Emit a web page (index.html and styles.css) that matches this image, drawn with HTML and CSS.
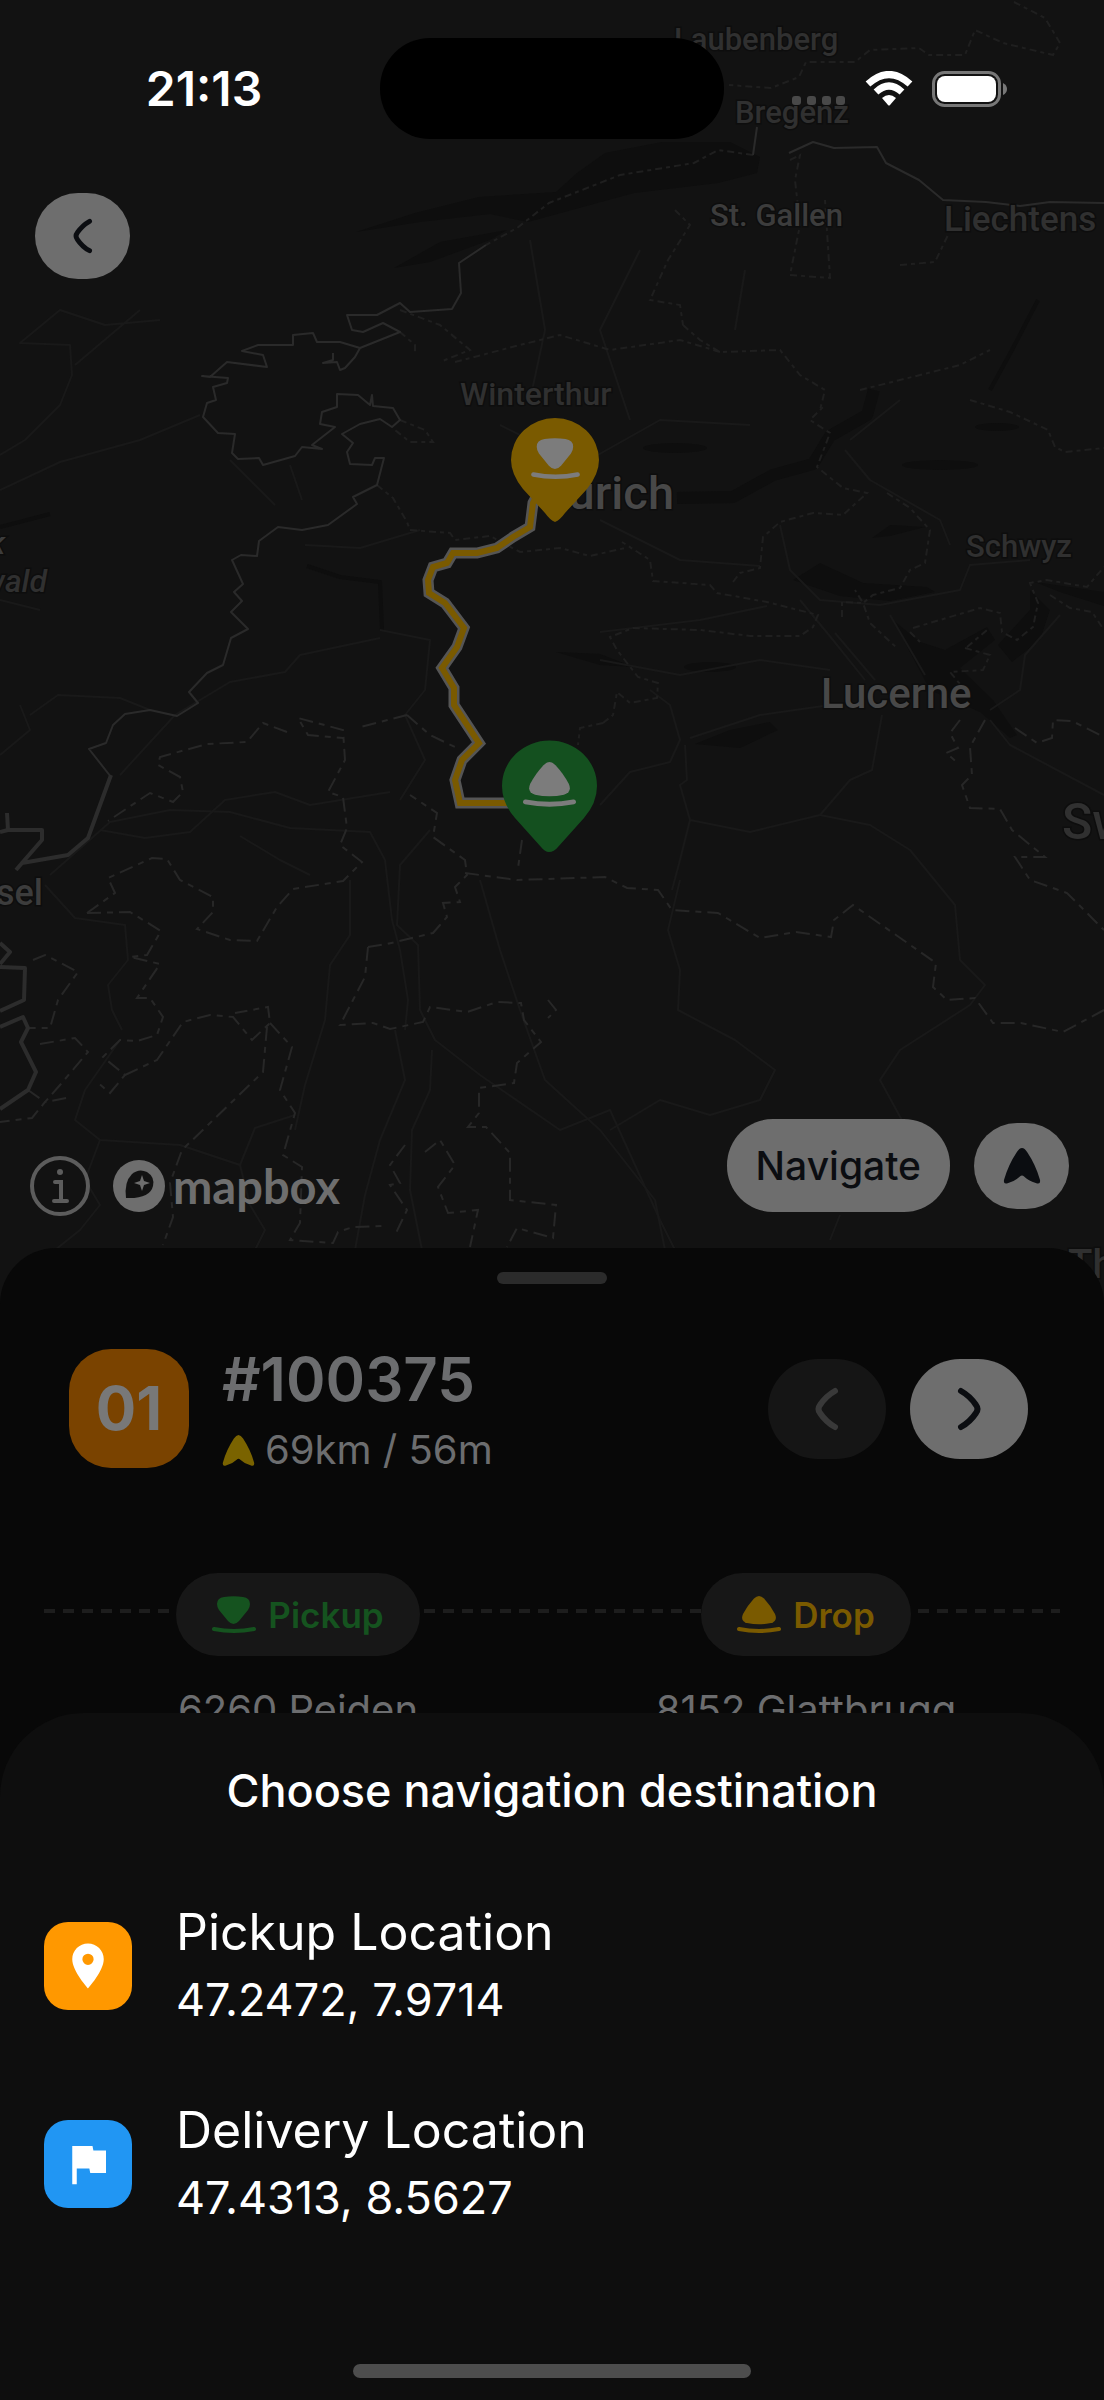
FILE: index.html
```html
<!DOCTYPE html>
<html lang="en">
  <head>
    <meta charset="UTF-8" />
    <meta name="viewport" content="width=device-width, initial-scale=1.0" />
    <title>Order #100375</title>
    <link rel="stylesheet" href="styles.css">
  </head>
  <body>
    <svg class="symbols" aria-hidden="true">
      <symbol id="icon-pickup" viewBox="0 0 44 38">
        <path fill="currentColor" d="M5 8Q5 2 12 1Q21.500 -.5 31 1Q38 2 38 8Q38 11 36 14L27 25Q21.500 31 16 25L7 14Q5 11 5 8Z" />
        <path fill="none" stroke="currentColor" stroke-width="4" stroke-linecap="round" d="M2 33Q22 37 42 33" />
      </symbol>
      <symbol id="icon-drop" viewBox="0 0 44 38">
        <path fill="currentColor" d="M17 2.500Q22 -2.500 27 2.500Q34 10 38 18Q41 25 34 27Q22 29.500 10 27Q3 25 6 18Q10 10 17 2.500Z" />
        <path fill="none" stroke="currentColor" stroke-width="4" stroke-linecap="round" d="M2 33Q22 37 42 33" />
      </symbol>
      <symbol id="icon-arrow" viewBox="0 0 36 36">
        <path fill="currentColor" d="M13 5Q18 -3 23 5Q31 17 35 31Q36 36 31 34Q24 32 20 28Q18 26 16 28Q12 32 5 34Q0 36 1 31Q5 17 13 5Z" />
      </symbol>
      <symbol id="icon-left" viewBox="0 0 24 44">
        <path fill="none" stroke="currentColor" stroke-width="6" stroke-linecap="round" stroke-linejoin="round" d="M20 4Q11 9 5 18Q2 22 5 26Q11 35 20 40" />
      </symbol>
      <symbol id="icon-right" viewBox="0 0 24 44">
        <path fill="none" stroke="currentColor" stroke-width="6" stroke-linecap="round" stroke-linejoin="round" d="M4 4Q13 9 19 18Q22 22 19 26Q13 35 4 40" />
      </symbol>
    </svg>

    <div class="screen">
      <section class="map-view">
        <svg class="map" viewBox="0 0 1104 1309" preserveAspectRatio="xMidYMin slice" role="img" aria-label="Route map">
          <g class="lakes">
            <path d="M356 232L415 213L479 197L556 192L577 173L605 153L662 142L730 142L760 157L757 173L718 183L634 193L528 222L490 214L420 222Z" />
            <path d="M394 268L440 242L507 230L490 240L430 262Z" />
            <path d="M793 580L820 563L863 583L927 587L935 592L890 601L840 596Z" />
            <path d="M893 620L920 642L945 650L987 627L995 640L960 668L993 700L1017 735L1010 738L980 712L930 690Z" />
            <path d="M998 645L1030 610L1030 590L1050 610L1040 640L1012 662Z" />
            <path d="M1035 582L1104 592L1104 606L1060 592Z" />
            <path d="M556 652L600 654L634 667L600 665Z" />
            <path d="M872 538L890 525L925 527L890 536Z" />
            <path d="M695 744L730 730L770 722L778 730L740 748Z" />
            <ellipse cx="710" cy="667" rx="26" ry="5" />
            <ellipse cx="675" cy="448" rx="32" ry="5" />
            <ellipse cx="940" cy="465" rx="38" ry="5" />
            <ellipse cx="997" cy="427" rx="22" ry="4" />
          </g>
          <path class="lake-line" d="M677 498L733 497L773 475L813 464L830 436L867 415L874 390" />
          <path class="lake-line thin" d="M990 390L1012 350L1038 300M0 527L50 514M307 566L340 577L380 582L382 630" />
          <g class="roads">
            <path d="M0 455L25 440L60 405L72 375L70 345L20 343L60 310L105 325L160 320M75 365L140 310M230 460L275 505M290 465L302 500M0 490L60 462L140 440L200 415" />
            <path d="M530 240L545 330L530 400M640 250L600 330L630 420" />
            <path d="M500 425L580 465L660 420L750 425M600 520L680 560L760 566M600 632L700 620L767 606" />
            <path d="M120 775L175 715L230 682L285 672L300 655L380 638M380 630L430 640L425 690L405 715L425 760L400 800" />
            <path d="M20 705L30 730L0 755M30 715L58 695L120 698L150 710M305 545L360 548L420 530" />
            <path d="M50 875L110 822L170 810L230 812L290 828L370 832L385 860L392 920L400 950L408 1000L405 1030" />
            <path d="M100 830L145 838L190 832L225 800L275 792L310 805L390 792M240 836L280 860L310 875" />
            <path d="M350 880L350 935L330 965L325 1020L305 1085L295 1130M430 830L400 865L397 925L418 945L420 1010L435 1040L480 1075L560 1130L610 1110L660 1220L675 1250" />
            <path d="M45 885L75 918L125 925L128 960L108 985L112 1010L122 1030M120 1040L85 1090L75 1120L100 1140L180 1145L240 1165L250 1205L265 1230L255 1250" />
            <path d="M295 1115L255 1128L240 1165M100 1140L85 1180L100 1205L80 1230L55 1250M395 1030L405 1080L380 1140L365 1195L355 1250M432 1050L430 1090L412 1130L410 1190L422 1250" />
            <path d="M480 880L500 950L520 1010L545 1080L600 1130L655 1200L665 1250M680 880L668 930L680 970L678 1010L735 1040L775 1070L760 1100L710 1115L660 1100L610 1130" />
            <path d="M600 805L630 772L670 762L680 740L670 705L650 690M685 745L687 780L680 785L690 820L750 832L820 815L850 780L872 770L882 715M690 820L680 860L672 890" />
            <path d="M690 738L760 715L830 705M820 815L870 825L910 850L955 905L960 960L985 985L970 1005L900 1050L880 1080L910 1135M990 720L1010 745L1104 795" />
            <path d="M800 600L833 640L865 680M835 633L875 680M890 615L925 675M780 525L790 570L820 600L880 605L960 590L970 565L1030 560M990 710L1020 690L1025 655L1060 615" />
            <path d="M600 660L680 675L760 660L830 670M845 450L870 480L940 520L950 545M900 400L850 440M745 270L735 330M0 600L40 610M830 1240L840 1215" />
          </g>
          <g class="districts">
            <path d="M87 913L115 893L108 878L152 858L167 859L180 880L213 897L213 912L197 929L230 940L257 941L277 907L293 889L343 881L362 862L340 845L347 828L343 797L328 792L345 760L343 730L298 718L308 735L343 738" />
            <path d="M407 715L357 728M287 732L263 723L247 742L207 744L160 757L158 765L180 777L183 792L173 802L150 793L108 821M407 715L430 735L457 748" />
            <path d="M87 913L130 912L161 931L147 955L130 957L160 964L137 998L150 998L163 1017L157 1035L137 1041L120 1040L103 1057L125 1075L110 1093L97 1082" />
            <path d="M125 1075L157 1060L183 1022L210 1015L233 1017L252 1040L270 1023L268 1007L235 1013" />
            <path d="M267 1027L263 1072L182 1150L170 1183L173 1217L163 1245M270 1023L292 1047L280 1090L295 1113L283 1155L302 1167L300 1223L290 1240L333 1243L338 1232L353 1227L383 1226" />
            <path d="M33 960L45 955L78 972L58 1000L50 1028L28 1028M40 1044L75 1038L88 1052L60 1085L45 1102L72 1097M28 1090L45 1102L32 1118L0 1122" />
            <path d="M368 947L365 977L340 1025L373 1023L390 1029L423 1022L430 1007L467 1012L497 1002L521 1003L524 1020L541 1042L517 1063L514 1083L479 1088L479 1113L468 1127L486 1127L510 1153L510 1200L556 1205L553 1238L517 1228L507 1247" />
            <path d="M368 947L387 944L433 933L447 917L443 903L460 902L455 887L467 875L465 860L433 837L437 813L410 795" />
            <path d="M405 1145L390 1165L400 1183L390 1185L407 1210L395 1235M425 1152L440 1140L455 1165L438 1187L448 1213L478 1210L470 1247M548 1000L556 1010L548 1018" />
            <path d="M465 873L517 880L605 877L627 888L658 890L672 910L718 913L760 938L796 932L831 937L834 920L853 905L936 963L933 987L947 1000L975 998L993 1023L1021 1023L1063 1032L1104 1010" />
            <path d="M985 720L970 747L972 775L962 785L970 808L1000 809L1012 830L1045 857L1015 857L1030 880L1067 893L1104 930M960 720L950 733L958 748L946 753L958 763" />
            <path d="M1015 728L1037 743L1052 738L1053 720L1072 721L1104 737M522 840L518 868" />
          </g>
          <g class="districts fine">
            <path d="M603 723L613 715L617 692L630 703L657 698L658 683L638 677L617 650L610 637L633 628L700 630L750 636L800 636L813 627L818 615L767 602L717 593L710 585L653 581L650 560L622 542M603 723L580 728L578 745" />
            <path d="M733 582L740 573L760 568L763 537L780 522L813 513L843 515L867 493L843 488L817 467L830 433L810 420L825 405" />
            <path d="M887 493L910 508L930 530L925 563L910 570L900 588L873 595L863 603L870 623L897 648M842 617L842 602L863 603L855 590" />
            <path d="M913 628L980 608L1000 613L1002 632L1017 640L1033 627L1038 603L1030 583L1047 580L1087 587L1104 567M1050 595L1070 608L1092 612L1104 630" />
            <path d="M967 647L987 630M910 632L920 642M965 648L990 655L983 670L950 672L965 690M970 400L1010 412L1048 430L1055 447L1065 452L1104 448" />
            <path d="M377 485L393 498L407 522L410 530L450 533L455 540L490 536L520 552L560 548L590 556L625 548" />
            <path d="M400 420L425 430L433 442L410 442L395 430M400 332L415 345L415 355M400 310L440 325L470 350L440 362" />
            <path d="M675 210L690 225L668 260L650 300L680 305L683 325M790 160L800 155L795 180L800 225L790 275L830 278L825 200M900 265L935 262L948 235M455 362L520 345L560 335L610 350L680 340L720 352M683 325L700 340L720 352L780 350L800 375L825 390L820 410M860 390L960 365L990 350" />
            <path d="M1014 2L1045 18L1060 43L1053 55L1003 43L975 30L965 55L929 55L919 48L870 50L855 62L806 62L799 77L771 88L729 85" />
            <path d="M753 155L718 150L694 163L620 175L549 203L517 228L486 245" />
          </g>
          <g class="border">
            <path d="M486 245L459 263L461 293L452 309L410 312L400 303L377 315L347 315L352 330L363 332L383 323L400 332L360 348L340 342L317 342L313 333L293 335L293 345L258 345L242 351L263 355L267 367L227 362L210 377L202 376L228 378L227 383L213 387L216 400L207 403L203 417L218 433L235 434L232 453L238 459L259 458L263 465L295 456L302 447L322 449L312 445L335 427L320 424L322 412L337 407L337 394L358 395L370 405L372 395L373 406L393 408L400 420L392 427L380 419L360 424L342 434L353 443L347 452L350 464L372 465L375 458L384 458L377 485L353 497L357 504L328 525L302 530L278 527L259 541L257 556L241 555L232 560L243 584L234 592L242 601L231 612L248 629L231 638L223 665L207 673L189 692L198 703L177 716L150 710L125 714L113 725L106 743L89 749L111 777" />
            <path d="M360 348L355 357L345 368L340 370L337 362L323 363L333 360L333 353" />
            <path d="M757 127L753 155M789 153L813 142L834 148L877 147L886 163L919 180L943 200L986 202L1020 206L1050 202L1104 203" />
            <path class="wide" d="M111 775L88 838L68 855L22 863L42 840L42 830L8 830L7 813M8 830L0 832M22 863L16 870" />
            <path class="wide" d="M0 943L10 952L0 964M0 967L25 968L24 1000L0 1011M0 1027L23 1017L28 1028L21 1042L36 1072L28 1090L0 1109" />
          </g>
          <g class="labels">
            <text x="674" y="50" font-size="31" class="dim">Laubenberg</text>
            <text x="735" y="123" font-size="31" class="dim">Bregenz</text>
            <text x="710" y="226" font-size="31">St. Gallen</text>
            <text x="944" y="231" font-size="35" class="dim">Liechtens</text>
            <text x="460" y="405" font-size="32" class="dim">Winterthur</text>
            <text x="674" y="509" font-size="47" text-anchor="end" class="city">Zürich</text>
            <text x="966" y="557" font-size="31" class="dim">Schwyz</text>
            <text x="821" y="708" font-size="42" class="city">Lucerne</text>
            <text x="1062" y="839" font-size="50" class="dim">Sw</text>
            <text x="43" y="905" font-size="36" text-anchor="end">sel</text>
            <text x="47" y="592" font-size="32" text-anchor="end" class="dim italic">wald</text>
            <text x="5" y="554" font-size="32" text-anchor="end" class="italic">k</text>
            <text x="1068" y="1278" font-size="40" class="dim">Th</text>
          </g>
          <path class="route-casing" d="M540 490L533 503L530 527L513 537L497 548L477 553L453 553L447 563L433 567L428 580L429 593L445 603L464 628L457 647L442 668L454 688L454 705L479 743L462 760L455 780L460 803L530 803" />
          <path class="route" d="M540 490L533 503L530 527L513 537L497 548L477 553L453 553L447 563L433 567L428 580L429 593L445 603L464 628L457 647L442 668L454 688L454 705L479 743L462 760L455 780L460 803L530 803" />
          <path class="pin-drop" d="M555 522Q550 520 545 513L523 489Q511 474 511 460A44 42 0 0 1 599 460Q599 474 587 489L565 513Q560 520 555 522Z" />
          <use class="pin-glyph" href="#icon-pickup" x="531" y="438" width="49" height="42" />
          <path class="pin-pickup" d="M549 852Q545 852 541 847L515 818Q502 803 502 786A47 45 0 0 1 597 786Q597 803 584 818L558 847Q554 852 549 852Z" />
          <use class="pin-glyph" href="#icon-drop" x="523" y="762" width="53" height="46" />
        </svg>

        <header class="status-bar">
          <time class="clock">21:13</time>
          <span class="island"></span>
          <div class="status-icons">
            <svg width="54" height="36" viewBox="0 0 54 36" fill="#494949" aria-hidden="true">
              <rect x="0" y="25" width="9" height="9" rx="3" />
              <rect x="15" y="25" width="9" height="9" rx="3" />
              <rect x="30" y="25" width="9" height="9" rx="3" />
              <rect x="44" y="25" width="9" height="9" rx="3" />
            </svg>
            <svg width="48" height="36" viewBox="0 0 48 36" aria-hidden="true">
              <path fill="none" stroke="#fff" stroke-width="7" d="M3 13Q24 -6 45 13" />
              <path fill="none" stroke="#fff" stroke-width="7" d="M11 21Q24 9 37 21" />
              <path fill="#fff" d="M17 27Q24 21 31 27L25 34Q24 35 23 34Z" />
            </svg>
            <svg width="76" height="36" viewBox="0 0 76 36" aria-hidden="true">
              <rect x="1.500" y="1.500" width="66" height="33" rx="11" fill="none" stroke="#777" stroke-width="3" />
              <rect x="5" y="5" width="59" height="26" rx="8" fill="#fff" />
              <path fill="#777" d="M71 12Q75 14 75 18Q75 22 71 24Z" />
            </svg>
          </div>
        </header>

        <button type="button" class="round-button back" aria-label="Back">
          <svg class="chevron" aria-hidden="true"><use href="#icon-left" /></svg>
        </button>

        <div class="map-footer">
          <div class="attribution">
            <button type="button" class="info" aria-label="Map information">
              <svg width="60" height="60" viewBox="0 0 60 60" fill="none" stroke="#5c5c5c" aria-hidden="true">
                <circle cx="30" cy="30" r="28" stroke-width="4" />
                <path stroke-width="4" stroke-linecap="round" d="M25 26H31V45M24 45H37" />
                <circle cx="30" cy="16" r="3" fill="#5c5c5c" stroke="none" />
              </svg>
            </button>
            <a class="mapbox" href="#mapbox">
              <svg width="52" height="52" viewBox="0 0 52 52" aria-hidden="true">
                <circle cx="26" cy="26" r="26" fill="#6e6e6e" />
                <path fill="#121212" d="M13 38Q11 22 19 14Q26 8 34 12Q42 17 40 26Q37 39 13 38Z" />
                <path fill="#6e6e6e" d="M29 15L31 21L37 23L31 25L29 31L27 25L21 23L27 21Z" />
              </svg>
              <span>mapbox</span>
            </a>
          </div>
          <div class="map-actions">
            <button type="button" class="navigate">Navigate</button>
            <button type="button" class="round-button" aria-label="Centre on route">
              <svg class="arrow" aria-hidden="true"><use href="#icon-arrow" /></svg>
            </button>
          </div>
        </div>
      </section>

      <main class="trip">
        <span class="handle"></span>
        <div class="trip-header">
          <span class="trip-number">01</span>
          <div class="trip-info">
            <h1>#100375</h1>
            <p>
              <svg class="distance-icon" aria-hidden="true"><use href="#icon-arrow" /></svg>
              69km / 56m
            </p>
          </div>
          <div class="trip-nav">
            <button type="button" class="step" aria-label="Previous trip" disabled>
              <svg class="chevron" aria-hidden="true"><use href="#icon-left" /></svg>
            </button>
            <button type="button" class="step" aria-label="Next trip">
              <svg class="chevron" aria-hidden="true"><use href="#icon-right" /></svg>
            </button>
          </div>
        </div>
        <div class="stops">
          <div class="stop">
            <span class="chip pickup">
              <svg class="stop-icon" aria-hidden="true"><use href="#icon-pickup" /></svg>
              Pickup
            </span>
            <p>6260 Reiden</p>
          </div>
          <div class="stop">
            <span class="chip drop">
              <svg class="stop-icon" aria-hidden="true"><use href="#icon-drop" /></svg>
              Drop
            </span>
            <p>8152 Glattbrugg</p>
          </div>
        </div>
      </main>

      <section class="destination-sheet" role="dialog" aria-labelledby="sheet-title">
        <h2 id="sheet-title">Choose navigation destination</h2>
        <button type="button" class="destination">
          <span class="destination-icon orange">
            <svg viewBox="0 0 24 24" aria-hidden="true">
              <path fill="#fff" d="M12 2C8.130 2 5 5.130 5 9c0 5.250 7 13 7 13s7-7.750 7-13c0-3.870-3.130-7-7-7zm0 9.500a2.500 2.500 0 0 1 0-5 2.500 2.500 0 0 1 0 5z" />
            </svg>
          </span>
          <span class="destination-text">
            <span class="name">Pickup Location</span>
            <span class="coords">47.2472, 7.9714</span>
          </span>
        </button>
        <button type="button" class="destination">
          <span class="destination-icon blue">
            <svg viewBox="0 0 24 24" aria-hidden="true">
              <path fill="#fff" d="M14.400 6L14 4H5v17h2v-7h5.600l.4 2h7V6z" />
            </svg>
          </span>
          <span class="destination-text">
            <span class="name">Delivery Location</span>
            <span class="coords">47.4313, 8.5627</span>
          </span>
        </button>
        <span class="home-indicator"></span>
      </section>
    </div>
  </body>
</html>
```
FILE: styles.css
```css
* {
  margin: 0;
  padding: 0;
  box-sizing: border-box;
}

body {
  background: #080808;
  color: #fff;
  font-family: Inter, "Liberation Sans", sans-serif;
}

button {
  border: none;
  background: none;
  color: inherit;
  font-family: inherit;
  cursor: pointer;
}

svg {
  display: block;
}

.symbols {
  position: absolute;
  width: 0;
  height: 0;
}

.screen {
  position: relative;
  display: flex;
  flex-direction: column;
  height: 100vh;
  overflow: hidden;
}

/* map */
.map-view {
  position: relative;
  display: flex;
  flex-direction: column;
  flex: none;
  height: 52vh;
  padding-top: 38px;
}

.map {
  position: absolute;
  top: 0;
  left: 0;
  width: 100%;
  height: calc(100% + 60px);
  background: #121212;
}

.status-bar,
.back,
.map-footer {
  position: relative;
}

.lakes {
  fill: #0e0e0e;
}

.lake-line {
  fill: none;
  stroke: #0e0e0e;
  stroke-width: 12;
  stroke-linejoin: round;
}

.lake-line.thin {
  stroke-width: 4;
}

.roads {
  fill: none;
  stroke: #191919;
  stroke-width: 2;
  stroke-linejoin: round;
}

.districts {
  fill: none;
  stroke: #272727;
  stroke-width: 2;
  stroke-dasharray: 14 6 6 6;
}

.districts.fine {
  stroke: #1f1f1f;
  stroke-dasharray: 7 4 4 4;
}

.border {
  fill: none;
  stroke: #2a2a2a;
  stroke-width: 2;
  stroke-linejoin: round;
}

.border .wide {
  stroke: #2c2c2c;
  stroke-width: 4;
}

.labels {
  fill: #3c3c3c;
  stroke: #0d0d0d;
  stroke-width: 3;
  paint-order: stroke;
  font-family: Roboto, sans-serif;
  font-weight: 500;
}

.labels .dim {
  fill: #303030;
}

.labels .city {
  fill: #484848;
}

.labels .italic {
  font-style: italic;
}

.route,
.route-casing {
  fill: none;
  stroke: #7a5a00;
  stroke-width: 6;
}

.route-casing {
  stroke: #555;
  stroke-width: 11;
}

.pin-drop {
  fill: #7a5a00;
}

.pin-pickup {
  fill: #14501f;
}

.pin-glyph {
  color: #7c7c7c;
}

.status-bar {
  display: grid;
  grid-template-columns: 1fr 344px 1fr;
  align-items: center;
}

.clock {
  padding-left: 28px;
  font-size: 48px;
  font-weight: 600;
  text-align: center;
}

.island {
  height: 101px;
  border-radius: 50px;
  background: #000;
}

.status-icons {
  display: flex;
  justify-content: flex-end;
  gap: 19px;
  padding-right: 96px;
}

.round-button {
  display: flex;
  align-items: center;
  justify-content: center;
  width: 95px;
  height: 86px;
  border-radius: 43px;
  background: #6e6e6e;
  color: #0b0d11;
}

.back {
  margin: 54px 0 0 35px;
}

.chevron {
  width: 24px;
  height: 44px;
}

.back .chevron {
  width: 20px;
  height: 36px;
}

.arrow {
  width: 38px;
  height: 38px;
}

.map-footer {
  display: flex;
  align-items: flex-end;
  justify-content: space-between;
  margin-top: auto;
  padding: 0 35px 36px 30px;
}

.attribution,
.mapbox,
.map-actions {
  display: flex;
  align-items: center;
}

.attribution {
  gap: 23px;
  height: 52px;
}

.mapbox {
  gap: 8px;
  color: #6e6e6e;
  font-family: Lato, sans-serif;
  font-size: 47px;
  font-weight: 700;
  line-height: 48px;
  text-decoration: none;
}

.map-actions {
  gap: 24px;
}

.navigate {
  height: 93px;
  padding: 0 29px;
  border-radius: 46px;
  background: #6e6e6e;
  color: #0b0d11;
  font-size: 39px;
  font-weight: 500;
}

/* trip */
.trip {
  position: relative;
  display: flex;
  flex-direction: column;
  flex: 1;
  padding: 24px 44px 0;
  border-radius: 56px 56px 0 0;
  background: #080808;
  color: #6c6d6f;
}

.handle {
  align-self: center;
  width: 110px;
  height: 12px;
  border-radius: 6px;
  background: #2b2b2b;
}

.trip-header {
  display: flex;
  align-items: center;
  margin-top: 59px;
  padding: 0 32px 0 25px;
}

.trip-number {
  width: 120px;
  border-radius: 42px;
  background: #7a4300;
  color: #787878;
  font-size: 60px;
  font-weight: 700;
  line-height: 119px;
  text-align: center;
}

.trip-info {
  flex: 1;
  padding-left: 33px;
}

.trip-info h1 {
  font-size: 60px;
  font-weight: 600;
  line-height: 72px;
}

.trip-info p {
  display: flex;
  align-items: center;
  gap: 10px;
  margin-top: 11px;
  font-size: 40px;
  line-height: 48px;
}

.distance-icon {
  width: 33px;
  height: 33px;
  color: #7a6300;
}

.trip-nav {
  display: flex;
  gap: 24px;
}

.step {
  display: flex;
  align-items: center;
  justify-content: center;
  width: 118px;
  height: 100px;
  border-radius: 50px;
  background: #6e6e6e;
  color: #0b0d11;
}

.step:disabled {
  background: #151515;
  color: #393939;
}

.stops {
  display: grid;
  grid-template-columns: 1fr 1fr;
  margin-top: 99px;
  background: repeating-linear-gradient(to right, #1d1d1d 0 11px, transparent 11px 19px) 0 36px / 100% 4px no-repeat;
}

.stop {
  display: flex;
  flex-direction: column;
  align-items: center;
}

.stop p {
  margin-top: 30px;
  font-size: 40px;
  line-height: 48px;
}

.chip {
  display: flex;
  align-items: center;
  gap: 12px;
  height: 83px;
  padding: 0 36px;
  border-radius: 42px;
  background: #171717;
  font-size: 35px;
  font-weight: 600;
}

.stop-icon {
  width: 44px;
  height: 38px;
}

.chip.pickup {
  color: #15531f;
}

.chip.drop {
  color: #7a5a00;
}

/* destination sheet */
.destination-sheet {
  position: absolute;
  right: 0;
  bottom: 0;
  left: 0;
  display: flex;
  flex-direction: column;
  padding: 50px 0 22px;
  border-radius: 84px 84px 0 0;
  background: #0e0e0e;
}

.destination-sheet h2 {
  margin-bottom: 48px;
  font-size: 45px;
  font-weight: 500;
  line-height: 56px;
  text-align: center;
}

.destination {
  display: flex;
  align-items: center;
  gap: 44px;
  padding: 31px 44px;
  text-align: left;
}

.destination-icon {
  display: flex;
  align-items: center;
  justify-content: center;
  width: 88px;
  height: 88px;
  border-radius: 24px;
}

.destination-icon svg {
  width: 54px;
  height: 54px;
}

.orange {
  background: #ff9800;
}

.blue {
  background: #2196f3;
}

.destination-text {
  display: flex;
  flex-direction: column;
  line-height: 68px;
}

.name {
  font-size: 50px;
}

.coords {
  font-size: 45px;
}

.home-indicator {
  align-self: center;
  width: 36%;
  height: 14px;
  margin-top: 101px;
  border-radius: 7px;
  background: #4d4d4d;
}
```
